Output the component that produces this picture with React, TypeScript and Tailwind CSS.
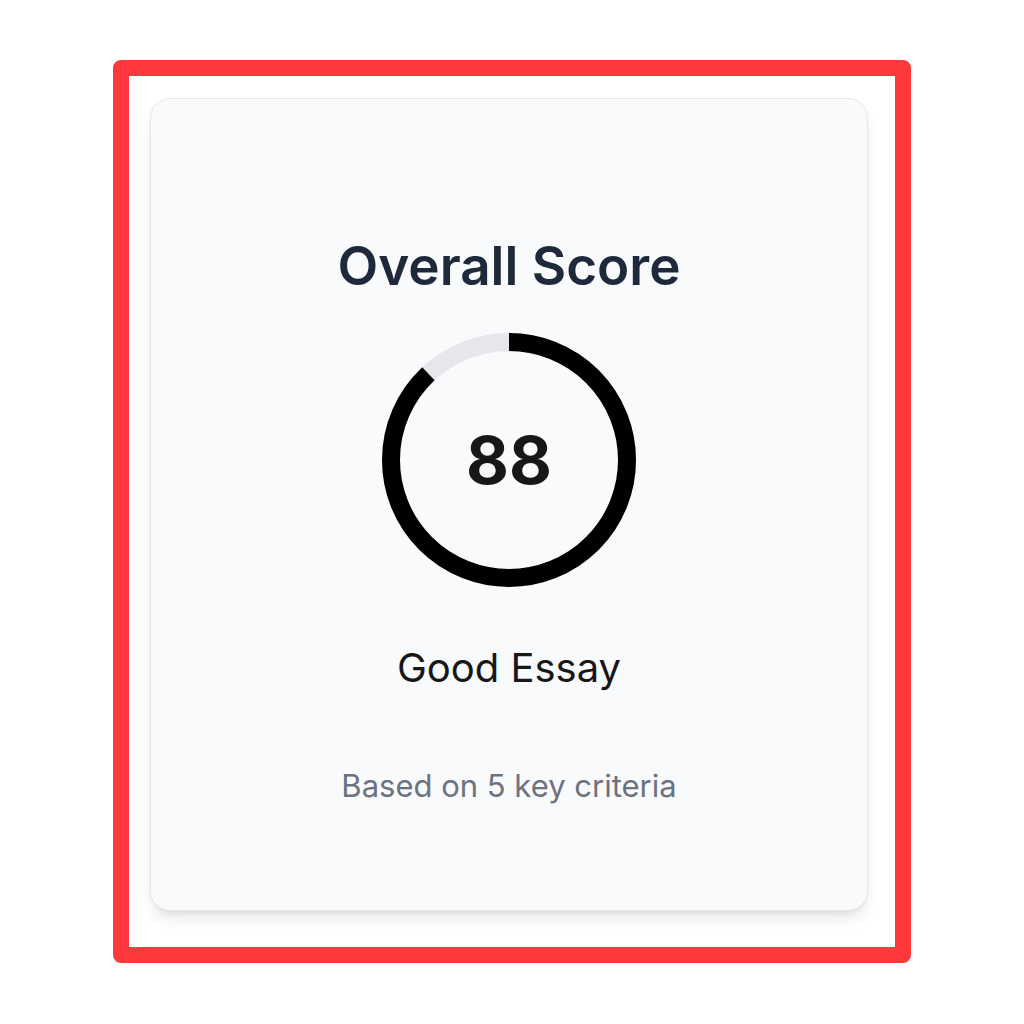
import React from 'react';

// Circular score gauge: grey track with the filled portion drawn clockwise from 12 o'clock
function ScoreRing({ score }: { score: number }) {
  const size = 254;
  const stroke = 18;
  const r = (size - stroke) / 2;
  const circumference = 2 * Math.PI * r;
  const offset = circumference * (1 - score / 100);

  return (
    <div className="relative w-[254px] h-[254px]">
      <svg width={size} height={size} viewBox={`0 0 ${size} ${size}`} className="-rotate-90">
        <circle cx={size / 2} cy={size / 2} r={r} fill="none" stroke="#e5e7eb" strokeWidth={stroke} />
        <circle
          cx={size / 2}
          cy={size / 2}
          r={r}
          fill="none"
          stroke="#000000"
          strokeWidth={stroke}
          strokeDasharray={circumference}
          strokeDashoffset={offset}
        />
      </svg>
      <div className="absolute inset-0 flex items-center justify-center">
        <span className="text-[66px] font-bold text-[#171717] leading-none">{score}</span>
      </div>
    </div>
  );
}

export default function App() {
  return (
    <div className="min-h-screen bg-white pt-[60px] pl-[113px] font-['Inter',sans-serif]">
      <div className="w-[798px] h-[903px] border-[16px] border-[#ff383c] rounded-[8px] pt-[22px] pl-[21px]">
        <div className="w-[718px] h-[813px] bg-[#f9fafb] border border-[#e5e7eb] rounded-[20px] shadow-lg flex flex-col items-center">
          <h2 className="mt-[134px] text-[53px] font-semibold text-[#1e293b] leading-tight">Overall Score</h2>
          <div className="mt-[34px]">
            <ScoreRing score={88} />
          </div>
          <p className="mt-[56px] text-[40px] text-[#171717] leading-tight">Good Essay</p>
          <p className="mt-[74px] text-[31px] text-[#6b7280] leading-tight">Based on 5 key criteria</p>
        </div>
      </div>
    </div>
  );
}
